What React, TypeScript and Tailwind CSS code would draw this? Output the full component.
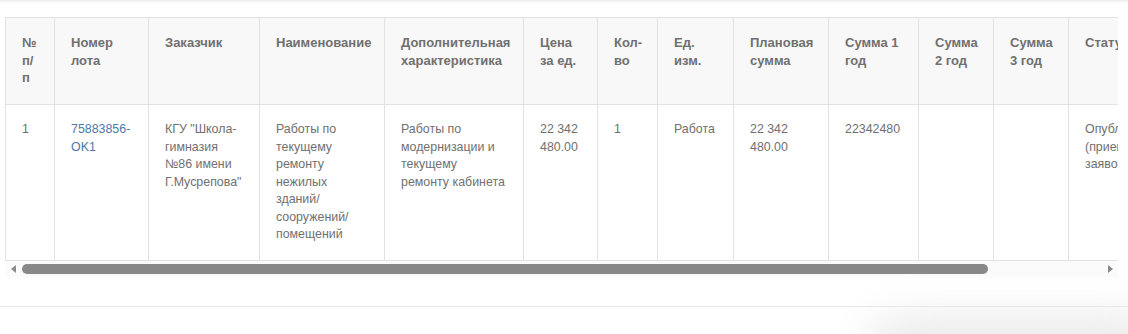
import React from 'react';

type Col = { title: React.ReactNode; width: number };

const cols: Col[] = [
  { title: <>№<br />п/<br />п</>, width: 49 },
  { title: 'Номер лота', width: 94 },
  { title: 'Заказчик', width: 111 },
  { title: 'Наименование', width: 125 },
  { title: 'Дополнительная характеристика', width: 139 },
  { title: 'Цена за ед.', width: 74 },
  { title: 'Кол-во', width: 60 },
  { title: 'Ед. изм.', width: 76 },
  { title: 'Плановая сумма', width: 95 },
  { title: 'Сумма 1 год', width: 90 },
  { title: 'Сумма 2 год', width: 75 },
  { title: 'Сумма 3 год', width: 75 },
  { title: 'Статус', width: 130 },
];

const cell = 'border border-[#e2e2e2] px-4 pt-4 pb-4 align-top text-left';

const App = () => {
  return (
    <div
      className="relative w-[1128px] h-[334px] bg-white overflow-hidden"
      style={{ fontFamily: '"Liberation Sans", Arial, sans-serif' }}
    >
      <div className="h-[3px] w-full bg-gradient-to-b from-[#ececec] to-white" />
      <div className="ml-[5px] mt-[14px] w-[1113px] overflow-hidden">
        <table className="table-fixed border-collapse w-[1193px] leading-[17.5px]">
          <colgroup>
            {cols.map((c, i) => (
              <col key={i} style={{ width: c.width }} />
            ))}
          </colgroup>
          <thead>
            <tr className="bg-[#f8f8f8]">
              {cols.map((c, i) => (
                <th key={i} className={cell + ' text-[13px] font-bold text-[#707070] h-[87px] whitespace-normal'}>
                  {c.title}
                </th>
              ))}
            </tr>
          </thead>
          <tbody className="text-[12.4px] text-[#707070]">
            <tr className="h-[156px]">
              <td className={cell}>1</td>
              <td className={cell}>
                <a href="#" className="text-[#4b79a8]">75883856-<br />OK1</a>
              </td>
              <td className={cell}>КГУ "Школа-<br />гимназия<br />№86 имени<br />Г.Мусрепова"</td>
              <td className={cell}>
                Работы по<br />текущему<br />ремонту<br />нежилых<br />зданий/<br />сооружений/<br />помещений
              </td>
              <td className={cell}>
                Работы по<br />модернизации и<br />текущему<br />ремонту кабинета
              </td>
              <td className={cell}>22 342<br />480.00</td>
              <td className={cell}>1</td>
              <td className={cell}>Работа</td>
              <td className={cell}>22 342<br />480.00</td>
              <td className={cell}>22342480</td>
              <td className={cell}></td>
              <td className={cell}></td>
              <td className={cell}>Опубликовано<br />(прием<br />заявок)</td>
            </tr>
          </tbody>
        </table>
      </div>
      {/* scrollbar */}
      <div className="ml-[5px] w-[1113px] h-[16px] bg-[#fbfbfb] flex items-center">
        <div className="w-[16px] flex justify-center">
          <div className="w-0 h-0 border-y-[4px] border-y-transparent border-r-[5px] border-r-[#8a8a8a]" />
        </div>
        <div className="flex-1 h-full flex items-center">
          <div className="ml-[1px] w-[966px] h-[10px] rounded-full bg-[#888]" />
        </div>
        <div className="w-[16px] flex justify-center">
          <div className="w-0 h-0 border-y-[4px] border-y-transparent border-l-[5px] border-l-[#8a8a8a]" />
        </div>
      </div>
      <div className="mt-[29px] h-px w-full bg-[#e6e6e6]" />
      <div className="absolute right-[-40px] bottom-[-50px] w-[300px] h-[70px] rounded-full bg-[#ececec] blur-[20px]" />
    </div>
  );
};

export default App;
